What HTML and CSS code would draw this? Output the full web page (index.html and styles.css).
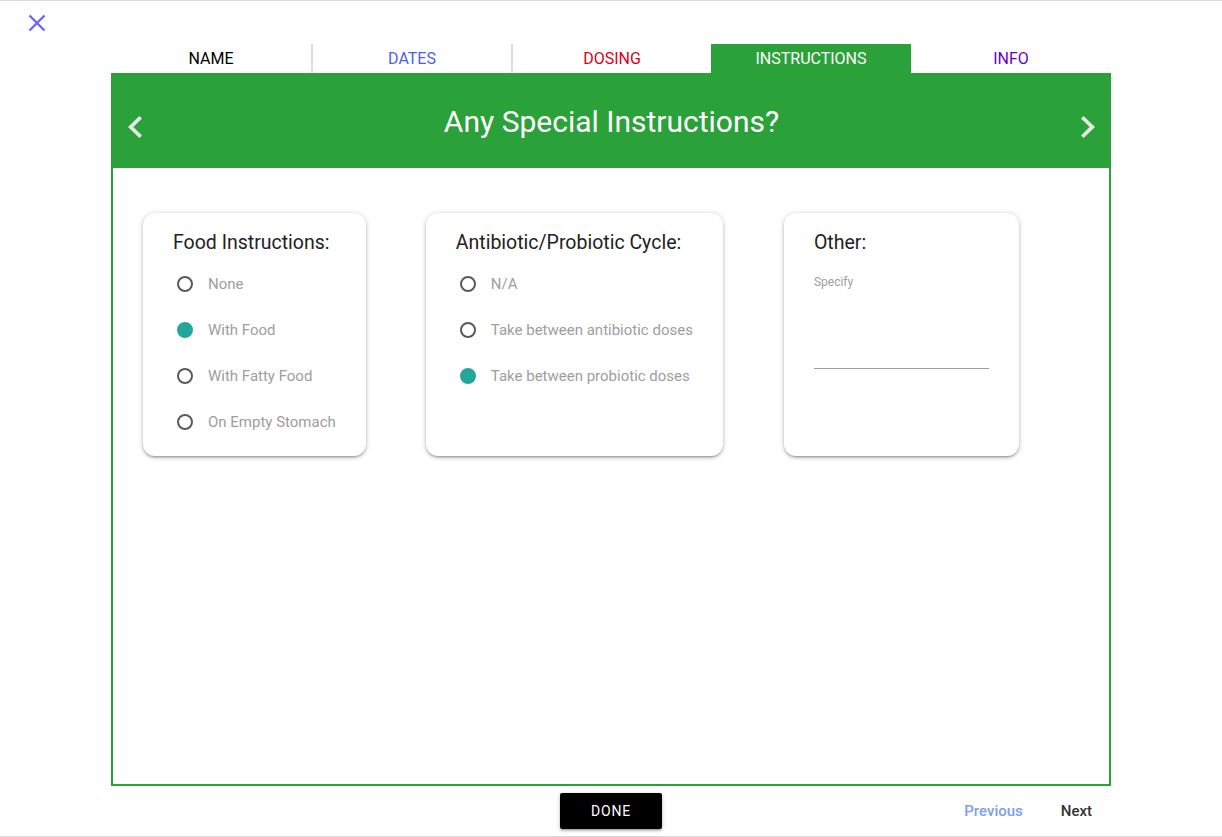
FILE: index.html
```html
<!DOCTYPE html>
<html>
<head>
<meta charset="utf-8">
<link rel="stylesheet" href="styles.css">
</head>
<body>
<div class="page">
  <div class="topbar">
    <svg class="close" width="18" height="18" viewBox="0 0 18 18"><path d="M1.5 1.5L16.5 16.5M16.5 1.5L1.5 16.5" stroke="#6767ff" stroke-width="2.4" fill="none"/></svg>
  </div>
  <div class="main">
    <div class="tabs">
      <div class="tab t-name">NAME</div>
      <div class="tab t-dates sep">DATES</div>
      <div class="tab t-dosing sep">DOSING</div>
      <div class="tab t-instr active">INSTRUCTIONS</div>
      <div class="tab t-info">INFO</div>
    </div>
    <div class="header">
      <svg class="chev" width="14" height="22" viewBox="8 6 7.41 12" preserveAspectRatio="none"><path d="M15.41 7.41L14 6l-6 6 6 6 1.41-1.41L10.83 12z" fill="#e6e6e6"/></svg>
      <div class="title">Any Special Instructions?</div>
      <svg class="chev" width="14" height="22" viewBox="8.59 6 7.41 12" preserveAspectRatio="none"><path d="M10 6L8.59 7.41 13.170 12l-4.58 4.59L10 18l6-6z" fill="#e6e6e6"/></svg>
    </div>
    <div class="body">
      <div class="cards">
        <div class="card">
          <div class="card-title">Food Instructions:</div>
          <div class="opt"><span class="radio"></span><span class="lbl">None</span></div>
          <div class="opt"><span class="radio checked"></span><span class="lbl">With Food</span></div>
          <div class="opt"><span class="radio"></span><span class="lbl">With Fatty Food</span></div>
          <div class="opt"><span class="radio"></span><span class="lbl">On Empty Stomach</span></div>
        </div>
        <div class="card">
          <div class="card-title">Antibiotic/Probiotic Cycle:</div>
          <div class="opt"><span class="radio"></span><span class="lbl">N/A</span></div>
          <div class="opt"><span class="radio"></span><span class="lbl">Take between antibiotic doses</span></div>
          <div class="opt"><span class="radio checked"></span><span class="lbl">Take between probiotic doses</span></div>
        </div>
        <div class="card card-other">
          <div class="card-title">Other:</div>
          <div class="field-label">Specify</div>
          <div class="field"></div>
        </div>
      </div>
    </div>
    <div class="footer">
      <div></div>
      <button class="done">DONE</button>
      <div class="nav">
        <span class="prev">Previous</span>
        <span class="next">Next</span>
      </div>
    </div>
  </div>
</div>
</body>
</html>
```
FILE: styles.css
```css
html, body {
  margin: 0;
  padding: 0;
  background: #fff;
  font-family: Roboto, "Liberation Sans", Arial, sans-serif;
}
.page {
  height: 837px;
  box-sizing: border-box;
  border-top: 1px solid #dcdcdc;
  border-bottom: 1px solid #dcdcdc;
  display: flex;
  flex-direction: column;
}
.topbar {
  height: 43px;
  box-sizing: border-box;
  padding: 13px 0 0 28px;
}
.close { display: block; }
.main {
  width: 1000px;
  margin-left: 111px;
}
.tabs {
  display: flex;
  height: 29px;
}
.tab {
  width: 200px;
  box-sizing: border-box;
  display: flex;
  align-items: center;
  justify-content: center;
  font-size: 16px;
}
.tab.sep { border-left: 2px solid #dddddd; }
.t-name { color: #000; }
.t-dates { color: #4d5ef2; }
.t-dosing { color: #d9001b; }
.t-instr { color: #fff; }
.t-info { color: #6a00c8; }
.tab.active { background: #2ba13a; }
.header {
  height: 95px;
  background: #2ba13a;
  display: flex;
  align-items: center;
  justify-content: space-between;
  padding: 0 16px 0 17px;
}
.chev { display: block; margin-top: 12px; }
.title {
  color: #fff;
  font-size: 30px;
  margin-top: 2px;
}
.body {
  height: 618px;
  box-sizing: border-box;
  border: 2px solid #2ba13a;
  border-top: none;
  padding: 45px 30px 0 30px;
}
.cards {
  display: flex;
  gap: 60px;
  align-items: stretch;
}
.card {
  background: #fff;
  border-radius: 12px;
  box-shadow: 0 2px 2px 0 rgba(0,0,0,0.14), 0 3px 1px -2px rgba(0,0,0,0.12), 0 1px 5px 0 rgba(0,0,0,0.25);
  padding: 18px 30px 11px 30px;
}
.card-other { margin-left: 1px; }
.card-title {
  font-size: 19.5px;
  line-height: 24px;
  color: #222;
  margin-bottom: 6px;
}
.opt {
  height: 46px;
  display: flex;
  align-items: center;
}
.radio {
  width: 16px;
  height: 16px;
  box-sizing: border-box;
  border: 2px solid #5a5a5a;
  border-radius: 50%;
  margin-left: 4px;
  flex: none;
}
.radio.checked {
  background: #26a69a;
  border-color: #26a69a;
}
.lbl {
  margin-left: 15px;
  font-size: 15px;
  color: #9e9e9e;
  white-space: nowrap;
}
.field-label {
  margin-top: 20px;
  font-size: 12px;
  line-height: 14px;
  color: #9e9e9e;
}
.field {
  width: 175px;
  height: 79px;
  border-bottom: 1px solid #9e9e9e;
}
.footer {
  height: 50px;
  display: grid;
  grid-template-columns: 1fr auto 1fr;
  align-items: start;
}
.done {
  margin-top: 7px;
  height: 36px;
  padding: 0 31px;
  background: #000;
  color: #fff;
  border: none;
  border-radius: 2px;
  font-family: Roboto, "Liberation Sans", Arial, sans-serif;
  font-size: 14px;
  letter-spacing: 0.8px;
  box-shadow: 0 2px 2px 0 rgba(0,0,0,0.14), 0 3px 1px -2px rgba(0,0,0,0.12), 0 1px 5px 0 rgba(0,0,0,0.2);
}
.nav {
  display: flex;
  justify-content: flex-end;
  gap: 38px;
  padding: 16px 19px 0 0;
  font-size: 15px;
  font-weight: 500;
}
.prev { color: #7f9cf5; }
.next { color: #333; }
```
